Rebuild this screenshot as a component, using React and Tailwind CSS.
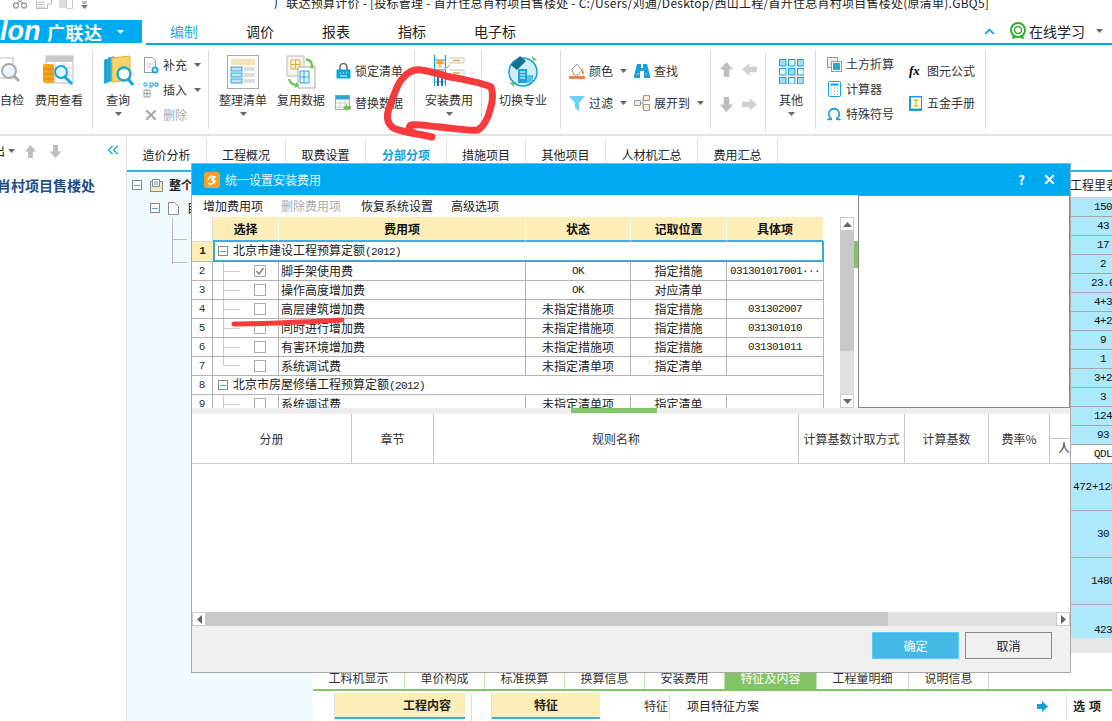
import React from "react";
import { X, ChevronUp, ChevronsLeft, Omega } from "lucide-react";

const mono = "font-['Liberation_Mono',monospace]";
const digits = "text-[11px] tracking-[-0.6px]";

const Caret = ({ className = "", color = "#666" }) => (
  <svg width="7" height="4" viewBox="0 0 7 4" className={className}>
    <path d="M0 0h7L3.500 4z" fill={color} />
  </svg>
);

const FatArrow = ({ dir = "up", color = "#bdbdbd", size = 15 }) => {
  const rot = { up: 0, right: 90, down: 180, left: 270 }[dir];
  return (
    <svg width={size} height={size} viewBox="0 0 16 16" style={{ transform: `rotate(${rot}deg)` }}>
      <path d="M8 0l7 8h-4v8H5V8H1z" fill={color} />
    </svg>
  );
};

const IconFeeView = () => (
  <svg width="32" height="32" viewBox="0 0 32 32">
    <rect x="3" y="1" width="27" height="27" fill="#fff" stroke="#bbb" />
    <rect x="3" y="1" width="27" height="6" fill="#c9c9c9" />
    <path d="M3 13h27M3 20h27M12 7v21M21 7v21" stroke="#ccc" />
    <rect x="0" y="9" width="11" height="19" rx="2" fill="#f8a51c" />
    <path d="M0 14h11M0 19h11M0 24h11" stroke="#d9820a" />
    <circle cx="18" cy="17" r="6" fill="#dff3fb" stroke="#17a6dc" strokeWidth="2" />
    <path d="M22 22l7 7" stroke="#17a6dc" strokeWidth="3" />
  </svg>
);

const IconQuery = () => (
  <svg width="31" height="34" viewBox="0 0 31 34">
    <path d="M1 6l10 -4v24l-10 4z" fill="#27b1e5" />
    <path d="M9 4l18 -2v24l-18 2z" fill="#fbd469" stroke="#e6ad2c" />
    <path d="M6 3v25M3 5v24" stroke="#148cb9" />
    <circle cx="21" cy="20" r="6.500" fill="#fff" stroke="#18a8de" strokeWidth="2.400" />
    <path d="M25 25l5 6" stroke="#18a8de" strokeWidth="3" />
  </svg>
);

const IconOrganize = () => (
  <svg width="32" height="34" viewBox="0 0 32 34">
    <rect x="0.500" y="0.500" width="31" height="33" fill="#fff" stroke="#aaa" />
    <rect x="4" y="4" width="24" height="6" fill="#f5e3b0" />
    <rect x="4" y="12" width="11" height="4" fill="#bfe6f6" stroke="#2aa6d8" />
    <rect x="4" y="18" width="11" height="4" fill="#bfe6f6" stroke="#2aa6d8" />
    <rect x="4" y="24" width="11" height="4" fill="#bfe6f6" stroke="#2aa6d8" />
    <path d="M17 14h11M17 20h11M17 26h11" stroke="#ddd" strokeWidth="4" />
  </svg>
);

const IconReuse = () => (
  <svg width="30" height="34" viewBox="0 0 30 34">
    <rect x="1" y="1" width="17" height="20" fill="#f4f4f4" stroke="#bbb" />
    <path d="M5 5h9v9H5zM5 9.500h9M9.500 5v9" fill="#fff3d0" stroke="#f0a92a" />
    <path d="M12 12h17v21H12z" fill="#fff" stroke="#aaa" />
    <path d="M14 16h9v12h-9zM14 22h9M18 16v12" fill="#e6f5fc" stroke="#2aa6d8" />
    <path d="M20 3c5 1 7 3 7 8l2 -1-3 4-3-4 2 1c0-3-2-5-5-5z" fill="#6cc24a" />
    <path d="M2 24c1 4 3 6 7 7l-1 2 5-2-3-4-0 2c-3-1-5-2-6-5z" fill="#6cc24a" />
  </svg>
);

const IconInstall = () => (
  <svg width="32" height="33" viewBox="0 0 32 33">
    <path d="M1.500 0v31M12.500 0v31" stroke="#1aa5dc" strokeWidth="1.300" />
    <path d="M1.500 5h11M1.500 27h11" stroke="#1aa5dc" />
    <path d="M3 9a4 4 0 018 0z" fill="#f5a623" />
    <circle cx="7" cy="11" r="2.200" fill="#f3c9a0" />
    <path d="M3 14h8v8H3z" fill="#a9b4bb" />
    <path d="M4 22h2v9H4zM8 22h2v9H8z" fill="#2d6f9c" />
    <path d="M11 15l6-5" stroke="#b9b9b9" strokeWidth="1.500" />
    <path d="M16 3h15M16 8h15M31 3v5M16 15h15M16 21h15M31 15v6" stroke="#c8c8c8" />
    <path d="M20 5.500h7M20 18h7" stroke="#f5a623" strokeWidth="1.500" />
  </svg>
);

const IconSwitch = () => (
  <svg width="32" height="33" viewBox="0 0 32 33">
    <circle cx="16" cy="17" r="14" fill="#cfeefa" stroke="#14a0d8" strokeWidth="1.500" />
    <path d="M4 10l9-9 6 5-9 9z" fill="#14708f" />
    <rect x="11" y="14" width="9" height="14" fill="#1aa5dc" />
    <rect x="20" y="20" width="6" height="8" fill="#58bfe6" />
    <path d="M13 17h5M13 20h5M13 23h5" stroke="#fff" />
    <path d="M25 1l5 4-4 1zM2 27l5 5 0-4z" fill="#6cc24a" />
  </svg>
);

const IconDocPlus = () => (
  <svg width="16" height="17" viewBox="0 0 16 17">
    <path d="M1.500 0.500h8l3 3v12h-11z" fill="#fff" stroke="#999" />
    <path d="M4 7h6M4 10h4" stroke="#bbb" />
    <circle cx="12" cy="13" r="3.500" fill="#1aa5dc" />
    <path d="M10 13h4M12 11v4" stroke="#fff" />
  </svg>
);

const IconInsert = () => (
  <svg width="16" height="16" viewBox="0 0 16 16">
    <path d="M1 1h3v3H1zM7 1h3v3H7zM12 1h3v3h-3z" fill="none" stroke="#1aa5dc" />
    <path d="M1 8h6v7H1zM1 11.500h6M4 8v7" fill="#fff" stroke="#999" />
    <path d="M6 5h3" stroke="#888" />
  </svg>
);

const IconLock = () => (
  <svg width="15" height="16" viewBox="0 0 15 16">
    <path d="M4 7V4a3.500 3.500 0 017 0v3" fill="none" stroke="#666" strokeWidth="1.500" />
    <rect x="0.500" y="6.500" width="14" height="9" fill="#0aa3e2" />
    <path d="M4 10h1M7 10h1M10 10h1M4 13h7" stroke="#fff" />
  </svg>
);

const IconReplace = () => (
  <svg width="16" height="16" viewBox="0 0 16 16">
    <rect x="0.500" y="0.500" width="14" height="14" fill="#fff" stroke="#aaa" />
    <rect x="0.500" y="0.500" width="14" height="4" fill="#2aa6d8" />
    <path d="M5 5v10M10 5v10M1 8h14M1 12h14" stroke="#ccc" />
    <path d="M8 13l4-4v2h4v3h-4v2z" fill="#6cc24a" />
  </svg>
);

const IconPaint = () => (
  <svg width="16" height="16" viewBox="0 0 16 16">
    <path d="M3 6l5-5 5 6-4 5H5z" fill="#fff" stroke="#999" />
    <path d="M13 5c1 2 2 4 2 6h-2z" fill="#f58b3c" />
    <rect x="0" y="13" width="16" height="3" fill="#f57f4f" />
  </svg>
);

const IconBinoculars = () => (
  <svg width="16" height="14" viewBox="0 0 16 14">
    <path d="M3 0h4v4h2V0h4l3 12a2 2 0 01-6 1V7H6v6a2 2 0 01-6-1z" fill="#14a0d8" />
    <path d="M3 10h2M11 10h2" stroke="#bfe6f6" />
  </svg>
);

const IconFunnel = () => (
  <svg width="16" height="15" viewBox="0 0 16 15">
    <path d="M0 0h16L10 7v8l-4-3V7z" fill="#6bd0f2" />
  </svg>
);

const IconExpand = () => (
  <svg width="16" height="16" viewBox="0 0 16 16">
    <path d="M0.500 5.500h6v5h-6zM9.500 0.500h6v5h-6zM9.500 9.500h6v6h-6z" fill="#f6ecd8" stroke="#999" />
    <path d="M7 8h2M9 3v11" stroke="#999" />
  </svg>
);

const IconGrid = () => (
  <svg width="25" height="25" viewBox="0 0 25 25">
    {[0, 9, 18].map((y) =>
      [0, 9, 18].map((x) => (
        <rect key={`${x}-${y}`} x={x + 0.5} y={y + 0.5} width="6.500" height="6.500" fill={(x + y) % 18 === 0 ? "#9fdcf4" : "#e6f6fd"} stroke="#14a0d8" />
      ))
    )}
  </svg>
);

const IconArea = () => (
  <svg width="15" height="15" viewBox="0 0 15 15">
    <rect x="0.500" y="0.500" width="10" height="10" fill="#eee" stroke="#999" />
    <rect x="4.500" y="4.500" width="10" height="10" fill="#fff" stroke="#999" />
    <rect x="6" y="6" width="7" height="7" fill="#2aa6d8" />
  </svg>
);

const IconCalc = () => (
  <svg width="13" height="16" viewBox="0 0 13 16">
    <rect x="0.500" y="0.500" width="12" height="15" rx="1" fill="#fff" stroke="#14a0d8" />
    <rect x="2.500" y="2.500" width="8" height="2" fill="#14a0d8" />
    <path d="M3 7h1M6 7h1M9 7h1M3 10h1M6 10h1M9 10h1M3 13h1M6 13h1M9 13h1" stroke="#f57f4f" />
  </svg>
);

const IconBook = () => (
  <svg width="13" height="15" viewBox="0 0 13 15">
    <rect x="0" y="0" width="13" height="15" fill="#14a0d8" />
    <rect x="2" y="1.500" width="10" height="11" fill="#fff" />
    <path d="M4.500 4h5M7 4v6M4.500 10h5" stroke="#f2c200" strokeWidth="1.500" />
  </svg>
);

const IconLearn = () => (
  <svg width="18" height="18" viewBox="0 0 18 18">
    <circle cx="9" cy="8" r="7" fill="none" stroke="#2fae2f" strokeWidth="2" />
    <circle cx="9" cy="8" r="3.500" fill="none" stroke="#2fae2f" strokeWidth="1.500" />
    <path d="M4 13l-1 4 4-1zM14 13l1 4-4-1z" fill="#2fae2f" />
  </svg>
);

const IconFolder = () => (
  <svg width="13" height="13" viewBox="0 0 13 13">
    <path d="M0.500 2.500h12v10h-12z" fill="#f8e9b8" stroke="#888" />
    <path d="M2.500 0.500h7v7h-7z" fill="#fff" stroke="#888" />
    <path d="M4 3h4M4 5h4" stroke="#2aa6d8" />
  </svg>
);

const IconDoc = () => (
  <svg width="11" height="13" viewBox="0 0 11 13">
    <path d="M0.500 0.500h6l4 4v8h-10z" fill="#fff" stroke="#888" />
  </svg>
);

const BigButton = ({ icon, label, caret, w = "w-[48px]", className = "" }) => (
  <div className={`flex flex-col items-center pt-[5px] ${w} ${className}`}>
    <div className="flex h-[34px] items-start justify-center">{icon}</div>
    <span className="mt-[5px] h-[12px] whitespace-nowrap text-[12px] leading-[12px]">{label}</span>
    {caret && <Caret className="mt-[6px]" />}
  </div>
);

const SmallRow = ({ icon, label, caret, muted, iconW = "w-[16px]", caretGap = "ml-[7px]" }) => (
  <div className={`flex h-[16px] items-center ${muted ? "text-[#aaa]" : ""}`}>
    <span className={`flex justify-center ${iconW}`}>{icon}</span>
    <span className="ml-[4px] whitespace-nowrap text-[12px] leading-[12px]">{label}</span>
    {caret && <Caret className={caretGap} />}
  </div>
);

const Group = ({ className, children }) => (
  <div className={`flex h-[79px] shrink-0 border-r border-[#dcdcdc] ${className}`}>{children}</div>
);

function Ribbon() {
  return (
    <div className="flex h-[91px] border-b-2 border-[#e3e3e3] pt-[5px] text-[#333]">
      <Group className="w-[93px] overflow-hidden">
        <BigButton w="w-[24px]" label="自检" icon={<span className="-ml-[9px] flex"><svg width="24" height="30" viewBox="0 0 24 30"><rect x="1" y="3" width="16" height="20" fill="#fff" stroke="#bbb" /><circle cx="13" cy="16" r="7" fill="#e6f5fc" stroke="#aaa" strokeWidth="2" /><path d="M18 21l5 5" stroke="#aaa" strokeWidth="3" /></svg></span>} />
        <BigButton className="ml-[11px]" label="费用查看" icon={<IconFeeView />} />
      </Group>
      <Group className="w-[116px]">
        <BigButton className="ml-[13px]" w="w-[24px]" label="查询" caret icon={<span className="-mt-[1px] flex"><IconQuery /></span>} />
        <div className="ml-[13px] flex flex-col gap-[9px] pt-[7px]">
          <SmallRow icon={<IconDocPlus />} label="补充" caret />
          <SmallRow icon={<IconInsert />} label="插入" caret />
          <SmallRow muted icon={<X size={16} strokeWidth={3.5} color="#aaa" />} label="删除" />
        </div>
      </Group>
      <Group className="w-[206px]">
        <BigButton className="ml-[10px]" label="整理清单" caret icon={<IconOrganize />} />
        <BigButton className="ml-[10px]" label="复用数据" icon={<IconReuse />} />
        <div className="ml-[10px] flex flex-col gap-[16px] pt-[13px]">
          <SmallRow icon={<IconLock />} label="锁定清单" />
          <SmallRow icon={<IconReplace />} label="替换数据" />
        </div>
      </Group>
      <Group className="w-[67px]">
        <BigButton className="ml-[10px]" label="安装费用" caret icon={<IconInstall />} />
      </Group>
      <Group className="w-[79px]">
        <BigButton className="ml-[17px]" label="切换专业" icon={<IconSwitch />} />
      </Group>
      <Group className="w-[150px]">
        <div className="ml-[8px] flex flex-col gap-[16px] pt-[13px]">
          <SmallRow icon={<IconPaint />} label="颜色" caret />
          <SmallRow icon={<IconFunnel />} label="过滤" caret />
        </div>
        <div className="ml-[7px] flex flex-col gap-[16px] pt-[13px]">
          <SmallRow icon={<IconBinoculars />} label="查找" />
          <SmallRow icon={<IconExpand />} label="展开到" caret />
        </div>
      </Group>
      <Group className="h-[70px] w-[55px] self-center">
        <div className="ml-[8px] grid grid-cols-2 content-start gap-x-[8px] gap-y-[20px] pt-[9px]">
          <FatArrow dir="up" />
          <FatArrow dir="left" color="#d0d0d0" />
          <FatArrow dir="down" />
          <FatArrow dir="right" color="#d0d0d0" />
        </div>
      </Group>
      <Group className="w-[50px]">
        <BigButton className="ml-[2px]" label="其他" caret w="w-[46px]" icon={<span className="mt-[4px] flex"><IconGrid /></span>} />
      </Group>
      <Group className="w-[170px]">
        <div className="ml-[10px] flex flex-col gap-[9px] pt-[6px]">
          <SmallRow icon={<IconArea />} label="土方折算" />
          <SmallRow icon={<IconCalc />} label="计算器" />
          <SmallRow icon={<Omega size={16} strokeWidth={2.5} color="#14a0d8" />} label="特殊符号" />
        </div>
        <div className="ml-[15px] flex flex-col gap-[16px] pt-[13px]">
          <div className="flex h-[16px] items-center text-[12px] leading-[12px]">
            <span className="w-[18px] font-['Liberation_Serif',serif] text-[13px] font-bold italic text-black">fx</span>
            <span>图元公式</span>
          </div>
          <div className="flex h-[16px] items-center text-[12px] leading-[12px]">
            <span className="w-[18px]"><IconBook /></span>
            <span>五金手册</span>
          </div>
        </div>
      </Group>
    </div>
  );
}

function MenuBar() {
  const tabs = [["调价", "w-[76px]"], ["报表", "w-[76px]"], ["指标", "w-[76px]"], ["电子标", "w-[90px]"]];
  return (
    <div className="flex h-[25px]">
      <div className="flex h-[23px] w-[142px] items-center overflow-hidden bg-[#00aaf0] text-white">
        <span className="w-[47px] shrink-0 font-['Liberation_Sans',sans-serif] text-[27px] font-bold italic leading-none">lon</span>
        <span className="whitespace-nowrap text-[18px] font-bold leading-none tracking-[0.5px]">广联达</span>
        <Caret className="ml-[14px]" color="#fff" />
      </div>
      <div className="ml-[4px] flex flex-1 border-b-2 border-[#00aaf0]">
        <div className="-mb-[2px] flex w-[76px] items-center justify-center border-b-2 border-[#00aaf0] text-[14px] text-[#28aee4]">编制</div>
        {tabs.map(([t, w]) => (
          <div key={t} className={`flex items-center justify-center text-[14px] text-[#222] ${w}`}>{t}</div>
        ))}
        <div className="ml-auto flex items-center pb-[1px]">
          <ChevronUp size={15} strokeWidth={3} color="#14a0d8" />
          <span className="ml-[12px] flex"><IconLearn /></span>
          <span className="ml-[2px] text-[14px] leading-none text-[#222]">在线学习</span>
          <Caret className="ml-[11px] mr-[9px]" />
        </div>
      </div>
    </div>
  );
}

function TitleBar() {
  return (
    <div className="flex h-[20px] overflow-hidden">
      <div className="flex h-[9px] w-[274px] shrink-0 items-end">
        <svg width="14" height="9" viewBox="0 0 14 9" className="ml-[13px] shrink-0">
          <circle cx="3" cy="5.500" r="2.500" fill="none" stroke="#999" strokeWidth="1.300" />
          <circle cx="11" cy="5.500" r="2.500" fill="none" stroke="#999" strokeWidth="1.300" />
          <path d="M4 3.500L9 0M10 3.500L5 0" stroke="#999" />
        </svg>
        <svg width="16" height="9" viewBox="0 0 16 9" className="ml-[9px] shrink-0">
          <path d="M0.500 0v8.500h11V4h4V0" fill="#fff" stroke="#bbb" />
          <path d="M2 2h7M2 4.500h7M2 7h7" stroke="#bbb" />
        </svg>
        <svg width="14" height="9" viewBox="0 0 14 9" className="ml-[7px] shrink-0">
          <path d="M0 0h7v8H0z" fill="#ddd" />
          <path d="M7.500 0v8.500h6V0" fill="#fff" stroke="#ccc" />
        </svg>
        <svg width="7" height="8" viewBox="0 0 7 8" className="ml-[8px] shrink-0">
          <path d="M1 0h5M1 2h5" stroke="#777" />
          <path d="M0 4h7L3.500 8z" fill="#777" />
        </svg>
      </div>
      <span className="-mt-[4px] whitespace-nowrap text-[12px] leading-[14px] tracking-[0.25px] text-[#222]">
        广联达预算计价 - [投标管理 - 首开住总肖村项目售楼处 - C:/Users/刘通/Desktop/西山工程/首开住总肖村项目售楼处(原清单).GBQ5]
      </span>
    </div>
  );
}

function TopTabs() {
  const tabs = [
    ["造价分析", "w-[80px]"],
    ["工程概况", "w-[79px]"],
    ["取费设置", "w-[80px]"],
    ["分部分项", "w-[81px]", true],
    ["措施项目", "w-[79px]"],
    ["其他项目", "w-[80px]"],
    ["人材机汇总", "w-[92px]"],
    ["费用汇总", "w-[80px]"],
  ];
  return (
    <div className="flex h-[36px] items-end border-b-2 border-[#3ab0e0]">
      {tabs.map(([t, w, on]) => (
        <div key={t} className={`flex h-[31px] items-center justify-center border-r border-[#e0e0e0] pt-[1px] text-[12px] ${w} ${on ? "font-bold text-[#14a0e0]" : "text-[#222]"}`}>{t}</div>
      ))}
    </div>
  );
}

const Minus = () => (
  <span className="flex h-[10px] w-[10px] shrink-0 items-center justify-center border border-[#888] bg-white">
    <span className="h-px w-[6px] bg-[#3ab0e0]" />
  </span>
);

function Sidebar() {
  return (
    <div className="flex w-[127px] shrink-0 flex-col border-r border-[#e0e0e0]">
      <div className="flex h-[33px] items-center pb-[3px]">
        <span className="-ml-[7px] text-[12px] text-[#222]">出</span>
        <Caret className="ml-[3px]" />
        <span className="ml-[9px] flex"><FatArrow dir="up" size={13} /></span>
        <span className="ml-[12px] flex"><FatArrow dir="down" size={13} /></span>
        <ChevronsLeft size={18} strokeWidth={1.5} color="#14a0d8" className="ml-[42px] -mt-[3px]" />
      </div>
      <div className="-ml-[3px] mt-[7px] whitespace-nowrap text-[14px] font-bold leading-[18px] text-[#1f4e87]">肖村项目售楼处</div>
    </div>
  );
}

function TreePanel() {
  return (
    <div className="w-[186px] shrink-0 overflow-hidden bg-[#f0fbff] pt-[5px]">
      <div className="flex h-[16px] items-center pl-[5px]">
        <Minus />
        <span className="ml-[8px] flex"><IconFolder /></span>
        <span className="ml-[6px] whitespace-nowrap text-[12px] font-bold">整个项目</span>
      </div>
      <div className="mt-[7px] flex h-[16px] items-center pl-[23px]">
        <Minus />
        <span className="ml-[8px] flex"><IconDoc /></span>
        <span className="ml-[8px] whitespace-nowrap text-[12px] text-[#222]">目</span>
      </div>
      <div className="ml-[45px] mt-[2px] flex w-[20px] flex-col border-l border-[#bbb]">
        <div className="flex h-[23px] items-end"><span className="mb-[1px] h-px w-[14px] bg-[#bbb]" /></div>
        <div className="flex h-[23px] items-end"><span className="mb-[1px] h-px w-[14px] bg-[#bbb]" /></div>
      </div>
    </div>
  );
}

function RightColumn() {
  const rows = ["150", "43", "17", "2", "23.0", "4+3", "4+2", "9", "1", "3+2", "3", "124", "93"];
  const rowCell = `flex items-center text-[#111] ${mono}`;
  return (
    <div className="ml-auto w-[42px] overflow-hidden">
      <div className="w-[66px]">
        <div className="flex h-[26px] items-center border-b border-[#ccc] text-[12px] text-[#222]">工程里表</div>
        {rows.map((r, i) => (
          <div key={i} className={`${rowCell} ${digits} h-[19px] justify-center border-b border-[#a5a5a5] bg-[#ade8fb]`}>{r}</div>
        ))}
        <div className={`${rowCell} ${digits} h-[19px] justify-center border-b border-[#aaa] bg-white`}>QDL</div>
        <div className={`${rowCell} h-[47px] border-b border-[#aaa] bg-[#ade8fb] pl-[3px] text-[11px] tracking-[-0.3px]`}>472+128</div>
        <div className={`${rowCell} ${digits} h-[47px] justify-center border-b border-[#aaa] bg-[#ade8fb]`}>30</div>
        <div className={`${rowCell} ${digits} h-[47px] justify-center border-b border-[#aaa] bg-[#ade8fb]`}>1480</div>
        <div className={`${rowCell} ${digits} h-[33px] items-start justify-center bg-[#ade8fb] pt-[17px]`}>423</div>
        <div className="h-[15px] bg-[#e6e6e6]" />
      </div>
    </div>
  );
}

function BottomTabs() {
  const tabs = [
    ["工料机显示", "w-[92px]"],
    ["单价构成", "w-[80px]"],
    ["标准换算", "w-[80px]"],
    ["换算信息", "w-[80px]"],
    ["安装费用", "w-[80px]"],
    ["特征及内容", "w-[92px]", true],
    ["工程量明细", "w-[92px]"],
    ["说明信息", "w-[80px]"],
  ];
  return (
    <div className="flex h-[23px] border-b-2 border-[#82c467]">
      {tabs.map(([t, w, on]) => (
        <div key={t} className={`flex items-end justify-center border-r border-[#bfe3ae] pb-[4px] text-[12px] leading-[14px] ${w} ${on ? "bg-[#82c467] text-white" : "text-[#333]"}`}>{t}</div>
      ))}
    </div>
  );
}

function BottomTables() {
  return (
    <div className="mt-[2px] flex h-[28px] overflow-hidden text-[12px]">
      <div className="w-[22px] border-r border-[#ddd]" />
      <div className="flex h-[26px] w-[130px] items-center justify-end border-b-2 border-[#3ab0e0] bg-[#fdedb6] pr-[14px] font-bold">工程内容</div>
      <div className="w-[6px]" />
      <div className="w-[21px] border-x border-[#ddd]" />
      <div className="flex h-[26px] w-[108px] items-center justify-center border-b-2 border-[#3ab0e0] bg-[#fdedb6] font-bold">特征</div>
      <div className="flex h-[26px] w-[70px] items-center justify-end border-r border-[#ddd] pr-[1px] text-[#333]">特征</div>
      <div className="flex h-[26px] w-[396px] items-center pl-[17px] text-[#222]">
        <span>项目特征方案</span>
        <span className="ml-auto mr-[18px] flex"><svg width="11" height="11" viewBox="0 0 11 11"><path d="M0 3h5V0l6 5.500L5 11V8H0z" fill="#14a0d8" /></svg></span>
      </div>
      <div className="flex h-[26px] flex-1 items-center whitespace-nowrap border-l border-[#ddd] pl-[6px] font-bold tracking-[4px]">选项</div>
    </div>
  );
}

const Box = ({ checked }) => (
  <span className="flex h-[12px] w-[12px] shrink-0 items-center justify-center border border-[#aaa] bg-white">
    {checked && <svg width="10" height="10" viewBox="0 0 10 10"><path d="M1.500 5l2.500 3 4.500-6" fill="none" stroke="#777" strokeWidth="1.300" /></svg>}
  </span>
);

const cell = "flex items-center border-r border-b border-[#b5b5b5] leading-none whitespace-nowrap";

function FeeRow({ no, name, status, ok, place, item, last }) {
  return (
    <>
      <div className={`${cell} justify-center text-[11px] text-[#333] ${mono}`}>{no}</div>
      <div className={`${cell} pl-[10px]`}>
        <span className={`flex w-[17px] border-l border-[#ccc] ${last ? "h-1/2 items-end self-start" : "h-full items-center"}`}>
          <span className="h-px w-full bg-[#ccc]" />
        </span>
        <span className="ml-[14px] flex"><Box checked={ok} /></span>
      </div>
      <div className={`${cell} pl-[2px] text-[12px] text-[#222]`}>{name}</div>
      {status === "OK"
        ? <div className={`${cell} ${digits} justify-center text-[#222] ${mono}`}>{status}</div>
        : <div className={`${cell} justify-center text-[12px] text-[#222]`}>{status}</div>}
      <div className={`${cell} justify-center text-[12px] text-[#222]`}>{place}</div>
      <div className={`${cell} ${digits} justify-center overflow-hidden text-[#222] ${mono}`}>{item}</div>
    </>
  );
}

const feeRows = [
  { no: 2, name: "脚手架使用费", status: "OK", ok: true, place: "指定措施", item: "031301017001···" },
  { no: 3, name: "操作高度增加费", status: "OK", place: "对应清单", item: "" },
  { no: 4, name: "高层建筑增加费", status: "未指定措施项", place: "指定措施", item: "031302007" },
  { no: 5, name: "同时进行增加费", status: "未指定措施项", place: "指定措施", item: "031301010" },
  { no: 6, name: "有害环境增加费", status: "未指定措施项", place: "指定措施", item: "031301011" },
  { no: 7, name: "系统调试费", status: "未指定清单项", place: "指定清单", item: "", last: true },
];

const feeCols = "grid w-[632px] grid-cols-[21px_66px_247px_105px_96px_97px]";

function FeeGrid() {
  const header = ["选择", "费用项", "状态", "记取位置", "具体项"];
  return (
    <div>
      <div className={`${feeCols} h-[25px]`}>
        <div className="border-r border-b border-[#ddd]" />
        {header.map((h) => (
          <div key={h} className="flex items-center justify-center border-r border-white border-b-2 border-b-[#3ab0e0] bg-[#fdedb6] text-[12px] font-bold text-[#111]">{h}</div>
        ))}
      </div>
      <div className={`${feeCols} h-[20px]`}>
        <div className={`flex items-center justify-center border-b border-[#b5b5b5] bg-[#fdedb6] text-[11px] font-bold ${mono}`}>1</div>
        <div className="col-span-5 flex items-center border-2 border-t-0 border-[#3aa8d8] pl-[3px] text-[12px] leading-none text-[#222]">
          <Minus />
          <span className="ml-[5px]">北京市建设工程预算定额<span className={`${digits} ${mono}`}>(2012)</span></span>
        </div>
      </div>
      <div className={`${feeCols} auto-rows-[19px]`}>
        {feeRows.map((r) => <FeeRow key={r.no} {...r} />)}
        <div className={`${cell} justify-center text-[11px] text-[#333] ${mono}`}>8</div>
        <div className="col-span-5 flex items-center border-r border-b border-[#b5b5b5] pl-[5px] text-[12px] leading-none text-[#222]">
          <Minus />
          <span className="ml-[5px]">北京市房屋修缮工程预算定额<span className={`${digits} ${mono}`}>(2012)</span></span>
        </div>
        <FeeRow no={9} name="系统调试费" status="未指定清单项" place="指定清单" item="" />
      </div>
    </div>
  );
}

const ScrollButton = ({ up }) => (
  <div className="flex h-[14px] items-center justify-center border border-[#ccc] bg-white">
    <svg width="9" height="5" viewBox="0 0 9 5"><path d={up ? "M0 5L4.500 0 9 5z" : "M0 0h9L4.500 5z"} fill="#666" /></svg>
  </div>
);

function RuleGrid() {
  const cols = [
    ["分册", "w-[161px]"],
    ["章节", "w-[82px]"],
    ["规则名称", "w-[367px]"],
    ["计算基数计取方式", "w-[106px]"],
    ["计算基数", "w-[85px]"],
    ["费率%", "w-[61px]"],
  ];
  return (
    <div className="flex h-[198px] flex-col overflow-hidden">
      <div className="flex h-[50px] border-b border-[#ccc]">
        {cols.map(([t, w]) => (
          <div key={t} className={`flex items-center justify-center border-r border-[#ccc] text-[12px] text-[#333] ${w}`}>{t}</div>
        ))}
        <div className="flex flex-1 flex-col">
          <div className="h-[25px] border-b border-[#ccc]" />
          <div className="pl-[8px] pt-[3px] text-[12px] leading-none text-[#333]">人</div>
        </div>
      </div>
    </div>
  );
}

function Dialog() {
  return (
    <div className="absolute left-[191px] top-[163px] flex h-[510px] w-[880px] flex-col border border-[#a8a8a8] bg-white">
      <div className="flex h-[31px] shrink-0 items-center bg-[#00aaf0] text-white">
        <span className="ml-[12px] flex h-[16px] w-[16px] items-center justify-center rounded-[3px] bg-[#f7a12c]">
          <svg width="12" height="12" viewBox="0 0 12 12"><path d="M2 6c0-3 4-5 7-3L6 6l3 1c-1 3-5 4-7 2M5 3l4 6" fill="none" stroke="#fff" strokeWidth="1.500" /></svg>
        </span>
        <span className="ml-[5px] text-[12px] text-[#e8f8ff]">统一设置安装费用</span>
        <span className="ml-auto text-[13px] font-bold leading-none">?</span>
        <X size={15} strokeWidth={3} className="ml-[17px] mr-[13px]" />
      </div>
      <div className="flex h-[213px] shrink-0">
        <div className="w-[648px] shrink-0 overflow-hidden">
          <div className="flex h-[22px] items-center pl-[11px] text-[12px] text-[#222]">
            <span>增加费用项</span>
            <span className="ml-[18px] text-[#aaa]">删除费用项</span>
            <span className="ml-[20px]">恢复系统设置</span>
            <span className="ml-[18px]">高级选项</span>
          </div>
          <FeeGrid />
        </div>
        <div className="mt-[22px] flex w-[14px] shrink-0 flex-col bg-[#e0e0e0]">
          <ScrollButton up />
          <div className="h-[120px] bg-[#c8c8c8]" />
          <div className="flex-1" />
          <ScrollButton />
        </div>
        <div className="mt-[46px] h-[27px] w-[4px] shrink-0 bg-[#82c467]" />
        <div className="flex-1 border border-[#888]" />
      </div>
      <div className="flex h-[6px] shrink-0 justify-start bg-[#eee]">
        <div className="ml-[379px] h-[5px] w-[86px] bg-[#82c467]" />
      </div>
      <RuleGrid />
      <div className="flex h-[14px] shrink-0 bg-[#e0e0e0]">
        <div className="flex w-[14px] items-center justify-center border border-[#ccc] bg-white">
          <svg width="5" height="9" viewBox="0 0 5 9"><path d="M5 0v9L0 4.500z" fill="#666" /></svg>
        </div>
        <div className="w-[682px] bg-[#c8c8c8]" />
        <div className="ml-auto flex w-[14px] items-center justify-center border border-[#ccc] bg-white">
          <svg width="5" height="9" viewBox="0 0 5 9"><path d="M0 0v9l5-4.500z" fill="#666" /></svg>
        </div>
      </div>
      <div className="flex flex-1 items-start justify-end gap-[6px] bg-[#f0f0f0] pr-[18px] pt-[6px] text-[12px]">
        <div className="flex h-[27px] w-[87px] items-center justify-center border border-[#5ccbf2] bg-[#45b8e6] text-white">确定</div>
        <div className="flex h-[27px] w-[87px] items-center justify-center border border-[#888] bg-[#f0f0f0] text-[#222]">取消</div>
      </div>
    </div>
  );
}

export default function App() {
  return (
    <div className="relative flex h-[721px] w-[1112px] flex-col overflow-hidden bg-white font-['Noto_Sans_CJK_SC','Liberation_Sans',sans-serif] text-[#222]">
      <TitleBar />
      <MenuBar />
      <Ribbon />
      <div className="flex min-h-0 flex-1">
        <Sidebar />
        <div className="flex min-w-0 flex-1 flex-col">
          <TopTabs />
          <div className="flex min-h-0 flex-1">
            <TreePanel />
            <div className="flex min-w-0 flex-1 flex-col">
              <div className="flex h-[496px] shrink-0"><RightColumn /></div>
              <BottomTabs />
              <BottomTables />
            </div>
          </div>
        </div>
      </div>
      <Dialog />
      <svg className="pointer-events-none absolute left-0 top-0" width="1112" height="721" viewBox="0 0 1112 721">
        <path d="M432 137C420 134 398 132 392 127C384 120 388 110 392 100C396 90 398 82 403 78C408 72 414 69 421 70C430 71 438 74 446 76C460 79 480 82 491 87C494 95 492 104 490 110C488 118 484 126 478 130C466 131 452 128 440 127C428 126 418 124 411 125C408 127 410 131 414 133" fill="none" stroke="#f53b3b" strokeWidth="7" strokeLinecap="round" strokeLinejoin="round" />
        <path d="M234 324C260 324 300 322 342 320" fill="none" stroke="#f53b3b" strokeWidth="5" strokeLinecap="round" />
      </svg>
    </div>
  );
}
